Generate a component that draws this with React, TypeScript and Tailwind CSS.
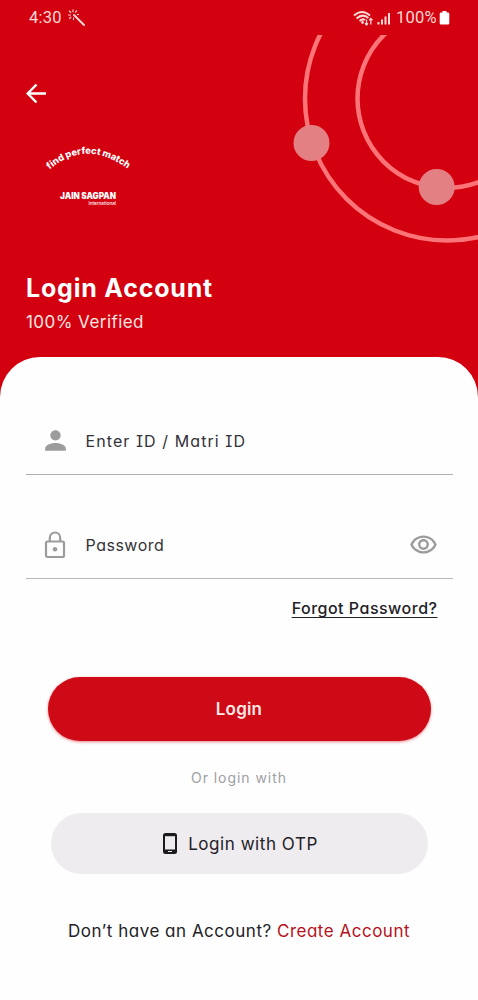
import React from 'react'
import { MdPerson, MdOutlineRemoveRedEye } from 'react-icons/md'

const StatusBar = () => {
    return (
        <div className="flex h-[35px] items-center justify-between pl-[29px] pr-[28px] font-[Roboto,sans-serif] text-[16.5px] text-[#ffd9d6]">
            <div className="flex items-center gap-[6px]">
                <span className="pt-[1px] tracking-[0.2px]">4:30</span>
                <svg width="18" height="18" viewBox="0 0 18 18" fill="none" stroke="currentColor" strokeLinecap="round">
                    <path d="M6 6L16 16" strokeWidth="1.9" />
                    <path d="M5 .8v2M1.3 2l1.5 1.5M.5 6h2M1.5 9.5l1.4-1.3M5.5 9v1.6M8.6 1.8L7.5 3.2M9.3 5.5h1.2" strokeWidth="1.1" />
                </svg>
            </div>
            <div className="flex items-center">
                <svg width="40" height="18" viewBox="0 0 40 18" fill="none" stroke="currentColor" className="mr-[3px]">
                    <path d="M1 6.5Q9-.5 17 6.5M3.5 9.5Q9.5 4 15.5 9M6.5 12Q9.5 9.4 12 11" strokeWidth="2" />
                    <circle cx="9.5" cy="13.5" r="1.4" fill="currentColor" stroke="none" />
                    <path d="M13.5 10.5v5.5M12 14.3l1.5 1.7 1.5-1.7M17.8 15.5V9.5M16.2 11.2l1.6-1.8 1.6 1.8" strokeWidth="1.3" />
                    <path d="M25.5 15.5v-2.5M29 15.5v-5M32.5 15.5V7.5M36 15.5V4" strokeWidth="2" />
                </svg>
                <span className="pt-[1px] tracking-[0.3px]">100%</span>
                <svg width="11" height="16" viewBox="0 0 11 16" fill="#fff" className="ml-[2px]">
                    <path d="M3.5 1h4v1.5H9a1.3 1.3 0 0 1 1.3 1.3v9.4A1.3 1.3 0 0 1 9 14.5H2a1.3 1.3 0 0 1-1.3-1.3V3.8A1.3 1.3 0 0 1 2 2.5h1.5z" />
                </svg>
            </div>
        </div>
    )
}

const Rings = () => {
    return (
        <svg width="198" height="215" viewBox="280 35 198 215" className="absolute right-0 top-[35px]">
            <g fill="none" stroke="#fb7478" strokeWidth="4.5">
                <circle cx="447" cy="98.5" r="142" />
                <circle cx="447" cy="98.5" r="89.5" />
            </g>
            <circle cx="311.5" cy="143" r="18" fill="#e28083" />
            <circle cx="436.7" cy="187" r="18" fill="#e28083" />
        </svg>
    )
}

const Logo = () => {
    return (
        <svg width="90" height="66" viewBox="43 142 90 66" className="mt-[38px] ml-[17px] overflow-visible font-[Inter,sans-serif] [font-feature-settings:normal]" fill="#fff">
            <path id="arc" d="M49.5 169.5Q88 137 131 171.5" fill="none" />
            <text className="text-[9.3px] font-extrabold">
                <textPath href="#arc">find perfect match</textPath>
            </text>
            <text x="60" y="199.3" className="text-[8.5px] font-black" textLength="56" lengthAdjust="spacingAndGlyphs">JAIN SAGPAN</text>
            <text x="88.5" y="204.5" className="text-[4.5px] font-medium" textLength="27.5" lengthAdjust="spacingAndGlyphs">International</text>
        </svg>
    )
}

const App = () => {
    return (
        <div className="relative flex h-[1000px] w-[478px] flex-col overflow-hidden bg-[#d3000f] font-[Inter,sans-serif] [font-feature-settings:'cv11','cv08']">
            <StatusBar />
            <Rings />
            <header className="flex h-[322px] flex-col px-[26px] pt-[48px] text-white">
                <svg width="21" height="21" viewBox="0 0 21 21" fill="none" stroke="#fff" strokeWidth="2.5">
                    <path d="M10.5 1.5L1.8 10.5L10.5 19.5M2 10.5H20" />
                </svg>
                <Logo />
                <h1 className="mt-[64px] w-max text-[25px] leading-[32px] font-bold tracking-[0.8px]">Login Account</h1>
                <p className="mt-[8px] w-max text-[17px] leading-[20px] tracking-[0.45px] text-[#ffe6e4]">100% Verified</p>
            </header>

            <main className="flex grow flex-col rounded-t-[40px] bg-[#fefefe] px-[25.5px] pt-[50px] text-[#333238]">
                <div className="flex h-[68px] items-center border-b-[1.5px] border-[#b0b0b0] pl-[14px]">
                    <MdPerson className="size-[31px] text-[#9c9c9c]" />
                    <span className="ml-[15px] text-[16px] tracking-[1.08px]">Enter ID / Matri ID</span>
                </div>
                <div className="mt-[36px] flex h-[68px] items-center border-b-[1.5px] border-[#b8b8b8] pl-[18px] pr-[15px]">
                    <svg width="22" height="28" viewBox="0 0 22 28" fill="none" stroke="#9c9c9c" strokeWidth="2.2">
                        <rect x="2" y="10.5" width="18" height="15.5" rx="1.5" />
                        <path d="M5.8 10.5V6.7a5.2 5.2 0 0 1 10.4 0v3.8" />
                        <circle cx="11" cy="18.2" r="2.3" fill="#9c9c9c" stroke="none" />
                    </svg>
                    <span className="ml-[20px] grow text-[16px] tracking-[0.5px]">Password</span>
                    <MdOutlineRemoveRedEye className="size-[29px] text-[#9c9c9c]" />
                </div>
                <a href="#" className="mt-[19px] mr-[15px] self-end text-[16px] leading-[21px] font-medium tracking-[0.5px] text-[#222126] underline underline-offset-[3px]">Forgot Password?</a>

                <button className="mx-[22px] mt-[58px] h-[64px] rounded-full bg-[#cf0a17] pt-[2px] text-[17px] font-semibold tracking-[0.2px] text-[#ffe9e6] shadow-[0_1px_3px_#cf0a1780]">Login</button>
                <p className="mt-[27px] w-max self-center text-[14px] leading-[20px] tracking-[0.95px] text-[#a09fa4]">Or login with</p>
                <button className="mx-[25px] mt-[25px] flex h-[61px] items-center justify-center rounded-full bg-[#efecef] pl-[3px] text-[17px] text-[#222126]">
                    <svg width="14" height="21" viewBox="0 0 14 21" className="mr-[11px]">
                        <rect width="14" height="21" rx="2.5" fill="#1c1b20" />
                        <path d="M2 3.2h10v13.3H2z" fill="#efecef" />
                        <path d="M5 18.5h4" stroke="#efecef" strokeWidth="1" />
                    </svg>
                    <span className="pt-[2px] tracking-[0.55px]">Login with OTP</span>
                </button>
                <p className="mt-[45px] w-max self-center text-[17px] leading-[24px] tracking-[0.51px] text-[#222126]">
                    <span>Don’t have an Account?</span> <a href="#" className="text-[#b5121b]">Create Account</a>
                </p>
            </main>
        </div>
    )
}

export default App
